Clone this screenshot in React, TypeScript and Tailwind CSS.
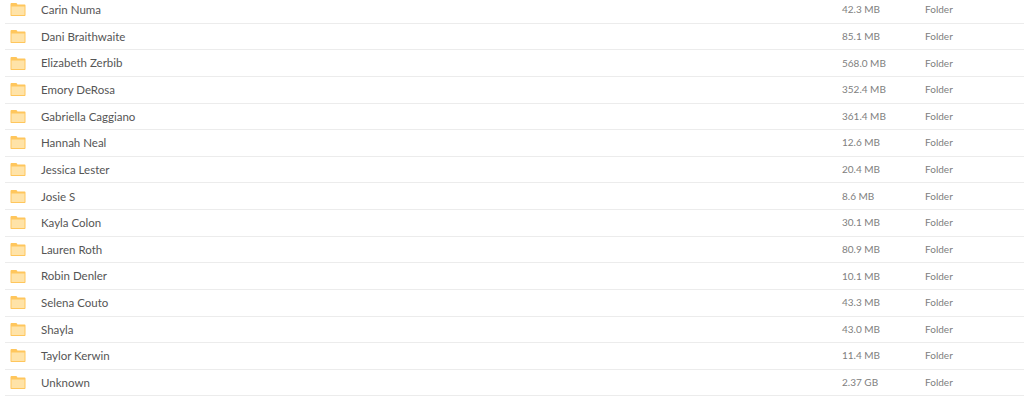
const files = [
  { name: "Carin Numa", size: "42.3 MB" },
  { name: "Dani Braithwaite", size: "85.1 MB" },
  { name: "Elizabeth Zerbib", size: "568.0 MB" },
  { name: "Emory DeRosa", size: "352.4 MB" },
  { name: "Gabriella Caggiano", size: "361.4 MB" },
  { name: "Hannah Neal", size: "12.6 MB" },
  { name: "Jessica Lester", size: "20.4 MB" },
  { name: "Josie S", size: "8.6 MB" },
  { name: "Kayla Colon", size: "30.1 MB" },
  { name: "Lauren Roth", size: "80.9 MB" },
  { name: "Robin Denler", size: "10.1 MB" },
  { name: "Selena Couto", size: "43.3 MB" },
  { name: "Shayla", size: "43.0 MB" },
  { name: "Taylor Kerwin", size: "11.4 MB" },
  { name: "Unknown", size: "2.37 GB" },
];

const FolderIcon = () => (
  <svg width="16" height="15" viewBox="0 0 16 15" className="shrink-0">
    <path d="M0.5 2.2 C0.5 1.4 1 1 1.7 1 L6 1 C6.6 1 6.9 1.3 7.1 1.8 L7.4 2.5 L14.5 2.5 C15.1 2.5 15.5 2.9 15.5 3.5 L15.5 13 C15.5 13.6 15.1 14 14.5 14 L1.5 14 C0.9 14 0.5 13.6 0.5 13 Z" fill="#ffc65c" />
    <rect x="1.5" y="4.5" width="13" height="8.5" fill="#ffe3a8" />
  </svg>
);

export default function App() {
  return (
    <div className="h-[401px] w-[1024px] overflow-hidden bg-white font-['Lato',sans-serif]">
      <div className="-mt-[3px] pl-[5px]">
        {files.map((file) => (
          <div
            key={file.name}
            className="flex h-[26.64px] items-center border-b border-[#ececec]"
          >
            <div className="flex w-[837px] items-center">
              <div className="ml-[5px] w-[26px]">
                <FolderIcon />
              </div>
              <span className="ml-[5px] text-[11.5px] text-[#555555]">{file.name}</span>
            </div>
            <span className="w-[83px] text-[10px] text-[#808080]">{file.size}</span>
            <span className="text-[10px] text-[#808080]">Folder</span>
          </div>
        ))}
      </div>
    </div>
  );
}
